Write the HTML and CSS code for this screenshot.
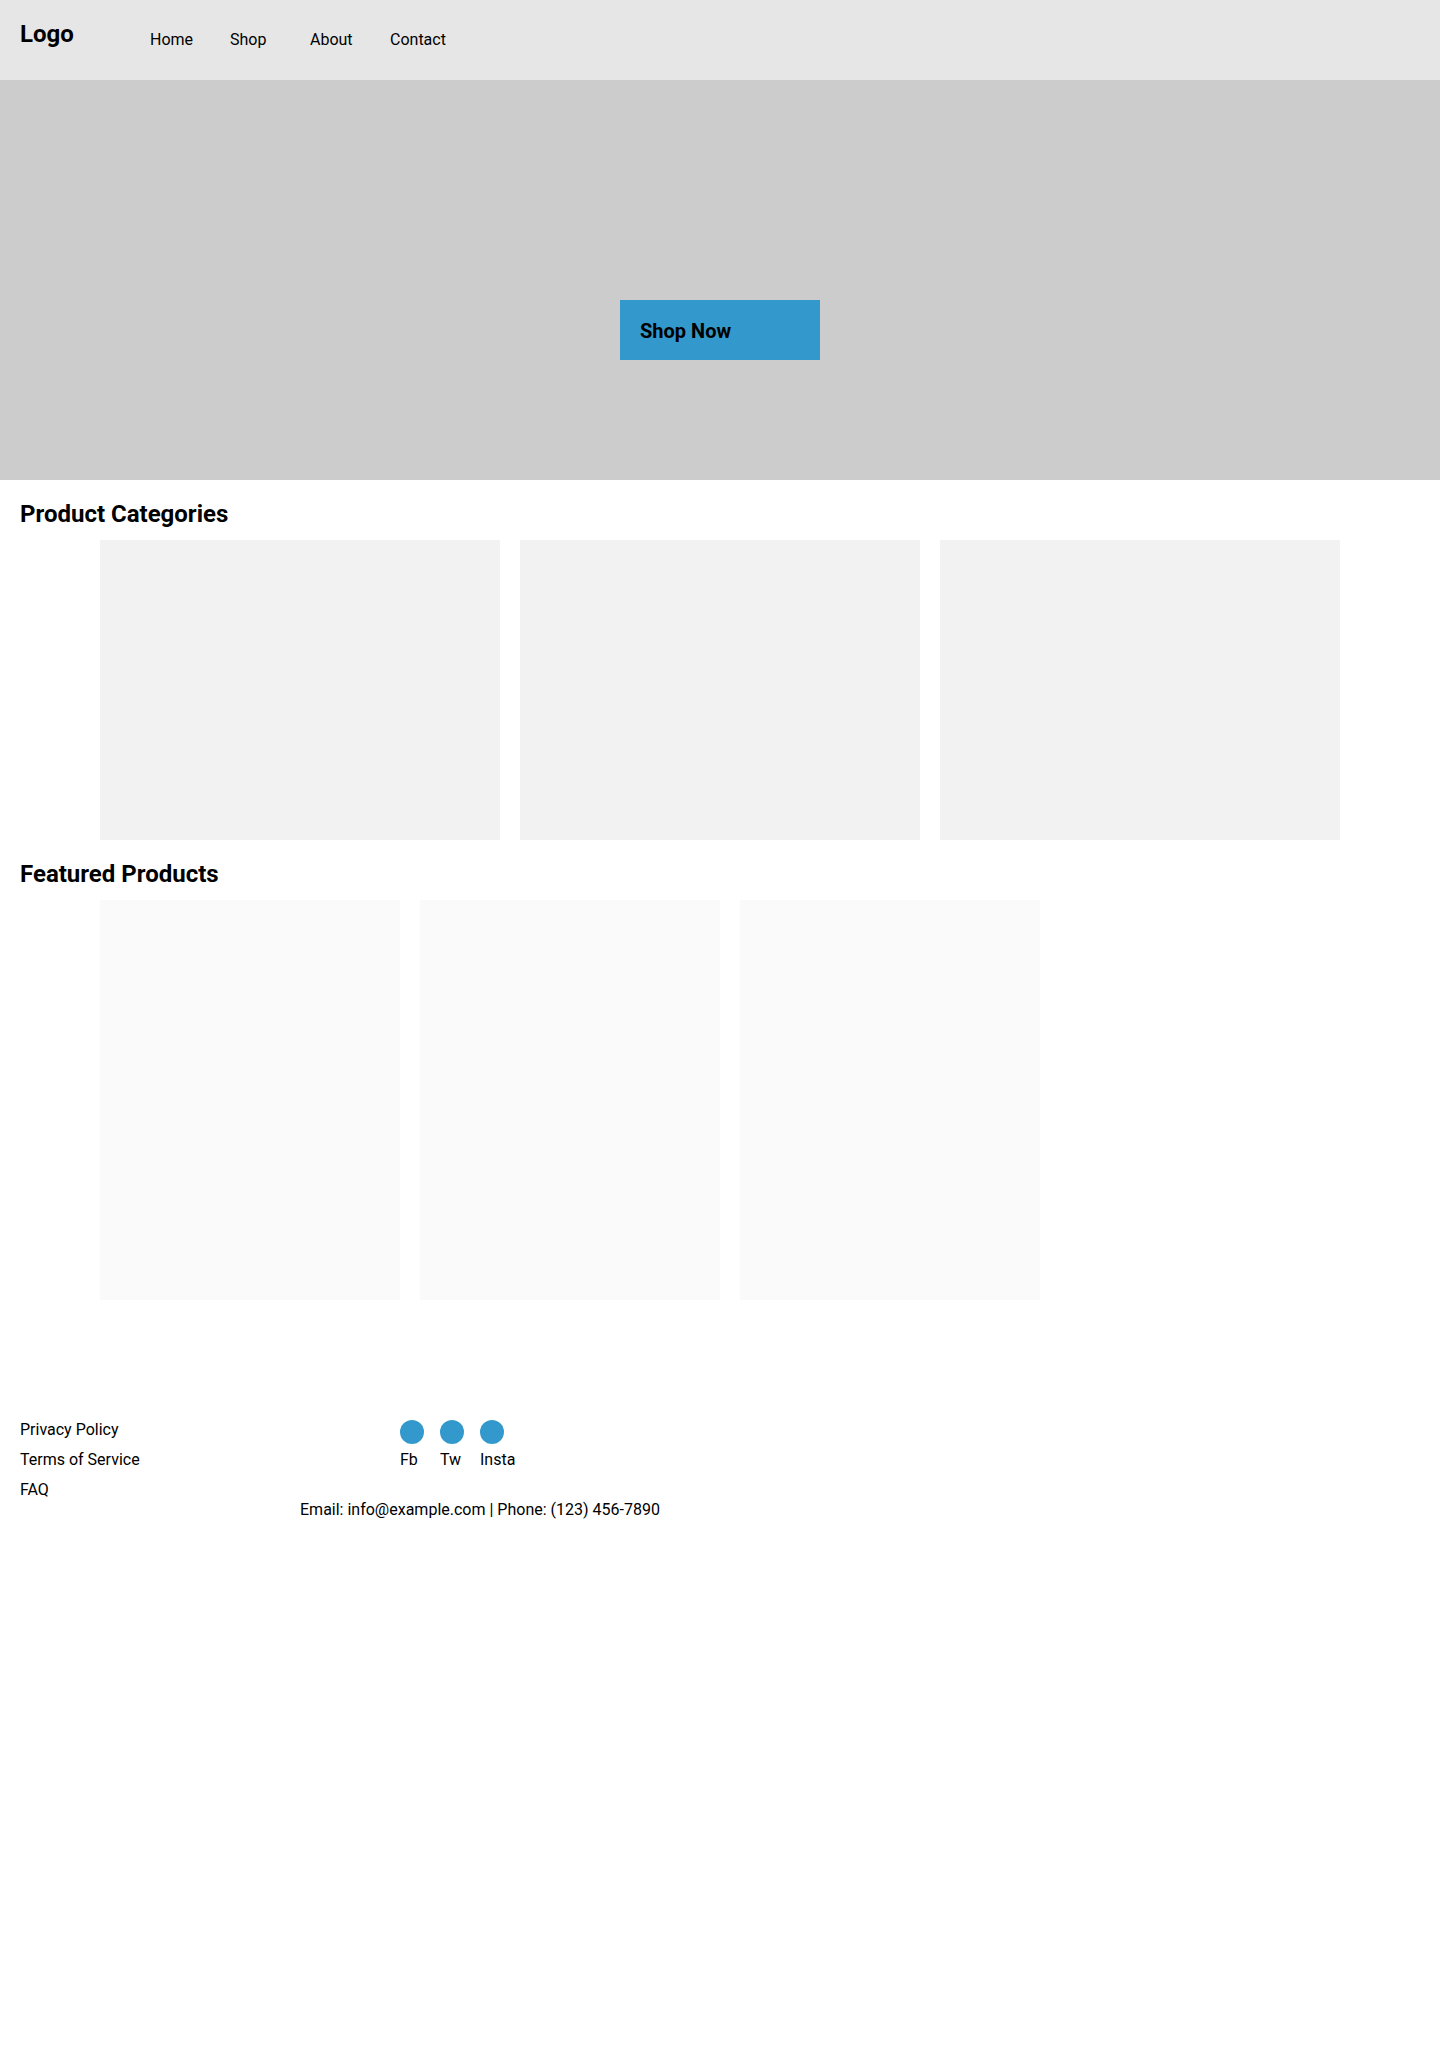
FILE: index.html
```html
<!DOCTYPE html>
<html lang="en">
<head>
  <meta charset="utf-8">
  <meta name="viewport" content="width=device-width, initial-scale=1">
  <title>Shop</title>
  <link rel="stylesheet" href="styles.css">
</head>
<body>
  <header class="header">
    <a class="logo" href="#">Logo</a>
    <nav class="nav" aria-label="Main">
      <a href="#">Home</a>
      <a href="#">Shop</a>
      <a href="#">About</a>
      <a href="#">Contact</a>
    </nav>
  </header>

  <main>
    <section class="hero">
      <button class="cta" type="button">Shop Now</button>
    </section>

    <section class="section">
      <h2 class="section-title">Product Categories</h2>
      <div class="categories">
        <div class="category"></div>
        <div class="category"></div>
        <div class="category"></div>
      </div>
    </section>

    <section class="section">
      <h2 class="section-title">Featured Products</h2>
      <div class="products">
        <div class="product"></div>
        <div class="product"></div>
        <div class="product"></div>
      </div>
    </section>
  </main>

  <footer class="footer">
    <nav class="footer-links" aria-label="Footer">
      <a href="#">Privacy Policy</a>
      <a href="#">Terms of Service</a>
      <a href="#">FAQ</a>
    </nav>
    <div class="footer-info">
      <div class="social">
        <a href="#"><span class="dot"></span>Fb</a>
        <a href="#"><span class="dot"></span>Tw</a>
        <a href="#"><span class="dot"></span>Insta</a>
      </div>
      <p class="contact">Email: info@example.com | Phone: (123) 456-7890</p>
    </div>
  </footer>
</body>
</html>
```

FILE: styles.css
```css
* {
  box-sizing: border-box;
}

body {
  margin: 0;
  background: #fff;
  color: #000;
  font-family: Roboto, "Liberation Sans", sans-serif;
  font-size: 16px;
  line-height: 20px;
}

a {
  color: inherit;
  text-decoration: none;
}

.header {
  display: flex;
  gap: 20px;
  min-height: 80px;
  padding: 20px;
  background: #e6e6e6;
}

.logo {
  width: 110px;
  font-size: 24px;
  font-weight: 700;
  line-height: 28px;
}

.nav {
  display: grid;
  grid-template-columns: repeat(4, 80px);
  padding-top: 10px;
}

.hero {
  display: flex;
  justify-content: center;
  align-items: flex-start;
  min-height: 400px;
  padding: 220px 20px 20px;
  background: #ccc;
}

.cta {
  width: 200px;
  padding: 20px 20px 18px;
  border: 0;
  background: #39c;
  color: #000;
  font: inherit;
  font-size: 20px;
  font-weight: 700;
  line-height: 22px;
  text-align: left;
  cursor: pointer;
}

.section-title {
  margin: 0;
  padding: 20px 20px 12px;
  font-size: 24px;
  font-weight: 700;
  line-height: 28px;
}

.categories {
  display: grid;
  grid-template-columns: repeat(3, 1fr);
  gap: 20px;
  padding: 0 100px;
}

.category {
  min-height: 300px;
  background: #f2f2f2;
}

.products {
  display: flex;
  flex-wrap: wrap;
  gap: 20px;
  padding: 0 100px;
}

.product {
  width: 300px;
  min-height: 400px;
  background: #fafafa;
}

.footer {
  display: flex;
  padding: 120px 20px 20px;
}

.footer-links {
  display: flex;
  flex-direction: column;
  gap: 10px;
  width: 280px;
}

.footer-info {
  display: flex;
  flex-direction: column;
  gap: 30px;
}

.social {
  display: grid;
  grid-template-columns: repeat(3, 40px);
  padding-left: 100px;
}

.dot {
  display: block;
  width: 24px;
  height: 24px;
  margin-bottom: 6px;
  border-radius: 50%;
  background: #39c;
}

.contact {
  margin: 0;
}
```
